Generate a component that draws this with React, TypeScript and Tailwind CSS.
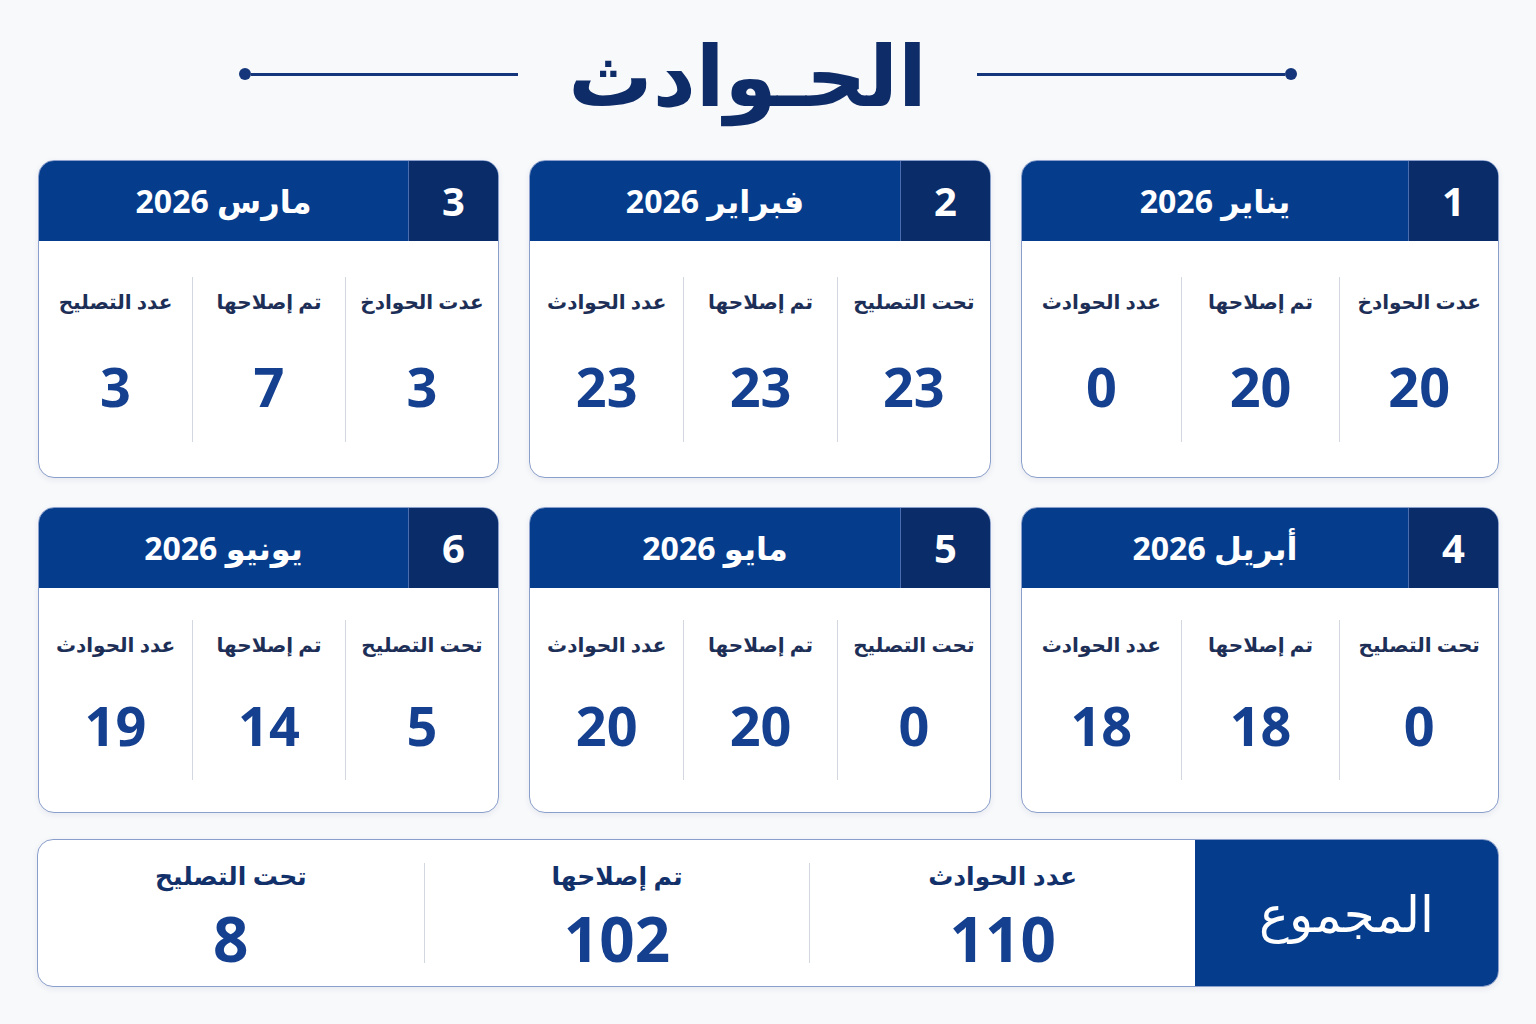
import React from 'react'

interface Stat {
  label: string
  value: string
}

interface MonthCard {
  index: string
  title: string
  stats: Stat[]
}

const months: MonthCard[] = [
  {
    index: '1',
    title: 'يناير 2026',
    stats: [
      { label: 'عدت الحوادخ', value: '20' },
      { label: 'تم إصلاحها', value: '20' },
      { label: 'عدد الحوادث', value: '0' },
    ],
  },
  {
    index: '2',
    title: 'فبراير 2026',
    stats: [
      { label: 'تحت التصليح', value: '23' },
      { label: 'تم إصلاحها', value: '23' },
      { label: 'عدد الحوادث', value: '23' },
    ],
  },
  {
    index: '3',
    title: 'مارس 2026',
    stats: [
      { label: 'عدت الحوادخ', value: '3' },
      { label: 'تم إصلاحها', value: '7' },
      { label: 'عدد التصليح', value: '3' },
    ],
  },
  {
    index: '4',
    title: 'أبريل 2026',
    stats: [
      { label: 'تحت التصليح', value: '0' },
      { label: 'تم إصلاحها', value: '18' },
      { label: 'عدد الحوادث', value: '18' },
    ],
  },
  {
    index: '5',
    title: 'مايو 2026',
    stats: [
      { label: 'تحت التصليح', value: '0' },
      { label: 'تم إصلاحها', value: '20' },
      { label: 'عدد الحوادث', value: '20' },
    ],
  },
  {
    index: '6',
    title: 'يونيو 2026',
    stats: [
      { label: 'تحت التصليح', value: '5' },
      { label: 'تم إصلاحها', value: '14' },
      { label: 'عدد الحوادث', value: '19' },
    ],
  },
]

const totals: Stat[] = [
  { label: 'عدد الحوادث', value: '110' },
  { label: 'تم إصلاحها', value: '102' },
  { label: 'تحت التصليح', value: '8' },
]

function Card({ card, tall }: { card: MonthCard; tall: boolean }) {
  return (
    <div
      className={
        'flex flex-col overflow-hidden rounded-2xl border border-[#8a9fcb] bg-white shadow-[0_2px_6px_rgba(15,40,90,0.08)] ' +
        (tall ? 'h-[318px]' : 'h-[306px]')
      }
    >
      <div className="flex h-[80px] shrink-0 bg-[#063c8c] text-white">
        <div className="flex w-[90px] shrink-0 items-center justify-center border-l border-[#4a6cb0] bg-[#0a2d6a] text-[40px] font-bold">
          {card.index}
        </div>
        <div className="flex flex-1 items-center justify-center text-[32px] font-bold">
          {card.title}
        </div>
      </div>
      <div className="flex flex-1 items-center">
        <div className={'grid w-full grid-cols-3 ' + (tall ? 'h-[165px]' : 'h-[160px]')}>
          {card.stats.map((s, i) => (
            <div
              key={i}
              className={
                'flex flex-col items-center pt-[10px] ' +
                (i < 2 ? 'border-l border-[#d3d8e0]' : '')
              }
            >
              <span className="text-[20px] font-bold text-[#1d2f57]">{s.label}</span>
              <span
                className={
                  'text-[54px] leading-none font-bold text-[#15408f] ' +
                  (tall ? 'mt-[42px]' : 'mt-[38px]')
                }
              >
                {s.value}
              </span>
            </div>
          ))}
        </div>
      </div>
    </div>
  )
}

export default function App() {
  return (
    <div
      dir="rtl"
      className="flex h-[1024px] w-[1536px] flex-col bg-[#f8f9fb] px-[37px] font-['Noto_Sans','DejaVu_Sans',sans-serif]"
    >
      <div dir="ltr" className="flex h-[150px] items-center justify-center gap-[50px] pb-[2px]">
        <div className="flex w-[279px] items-center">
          <div className="h-[12px] w-[12px] rounded-full bg-[#15367a]" />
          <div className="h-[3px] flex-1 bg-[#15367a]" />
        </div>
        <h1 dir="rtl" className="text-[84px] leading-none font-bold text-[#0e2c68]">
          الحـوادث
        </h1>
        <div className="flex w-[320px] items-center">
          <div className="h-[3px] flex-1 bg-[#15367a]" />
          <div className="h-[12px] w-[12px] rounded-full bg-[#15367a]" />
        </div>
      </div>

      <div className="mt-[10px] grid grid-cols-[478px_462px_461px] gap-x-[30px] gap-y-[29px]">
        {months.map((m, i) => (
          <Card key={m.index} card={m} tall={i < 3} />
        ))}
      </div>

      <div className="mt-[26px] flex h-[148px] overflow-hidden rounded-2xl border border-[#8a9fcb] bg-white shadow-[0_2px_6px_rgba(15,40,90,0.08)]">
        <div className="flex w-[303px] shrink-0 items-center justify-center bg-[#063c8c] text-[50px] font-medium text-white">
          المجموع
        </div>
        <div className="grid flex-1 grid-cols-3 items-center">
          {totals.map((t, i) => (
            <div
              key={i}
              className={
                'flex h-[100px] flex-col items-center justify-center pt-[6px] ' +
                (i < 2 ? 'border-l border-[#d3d8e0]' : '')
              }
            >
              <span className="text-[25px] leading-none font-bold text-[#12306a]">
                {t.label}
              </span>
              <span className="mt-[19px] text-[62px] leading-none font-bold text-[#15408f]">
                {t.value}
              </span>
            </div>
          ))}
        </div>
      </div>
    </div>
  )
}
